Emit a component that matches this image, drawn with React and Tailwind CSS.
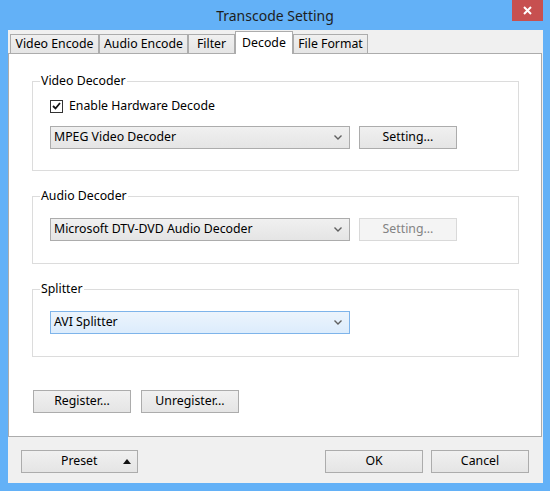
import { useState } from 'react';

const FONT = { fontFamily: '"Noto Sans", "Open Sans", "Liberation Sans", sans-serif' };

const TABS = [
  { label: 'Video Encode', width: 'w-[89px]' },
  { label: 'Audio Encode', width: 'w-[89px]' },
  { label: 'Filter', width: 'w-[47px]' },
  { label: 'Decode', width: 'w-[58px]' },
  { label: 'File Format', width: 'w-[75px]' },
];

function Chevron() {
  return (
    <svg width="8" height="5" viewBox="0 0 8 5" className="shrink-0">
      <polyline points="0.5,0.5 4,4 7.5,0.5" fill="none" stroke="#606060" strokeWidth="1.4" />
    </svg>
  );
}

function Select({ value, focused }) {
  return (
    <div
      className={
        'flex h-[23px] w-[300px] items-center justify-between border pl-[3px] pr-[7px] text-[12.3px] text-black ' +
        (focused
          ? 'border-[#7eb4ea] bg-gradient-to-b from-[#ecf4fc] to-[#dcecfc]'
          : 'border-[#acacac] bg-gradient-to-b from-[#f0f0f0] to-[#e5e5e5]')
      }
    >
      <span className="leading-none">{value}</span>
      <Chevron />
    </div>
  );
}

function Button({ children, disabled, className = '' }) {
  return (
    <button
      type="button"
      disabled={disabled}
      className={
        'flex h-[23px] items-center justify-center border text-[12.3px] leading-none ' +
        (disabled
          ? 'border-[#d9d9d9] bg-[#f4f4f4] text-[#838383] '
          : 'border-[#acacac] bg-gradient-to-b from-[#f0f0f0] to-[#e5e5e5] text-black ') +
        className
      }
    >
      {children}
    </button>
  );
}

function Group({ title, children, className = '' }) {
  return (
    <fieldset className={'w-[487px] border border-[#dcdcdc] p-0 ' + className}>
      <legend className="ml-[7px] px-[1px] text-[12.3px] leading-[16px] text-black">{title}</legend>
      <div className="pl-[17px]">{children}</div>
    </fieldset>
  );
}

export default function App() {
  const [tab, setTab] = useState('Decode');
  const [hw, setHw] = useState(true);

  return (
    <div style={FONT} className="relative h-[491px] w-[550px] select-none bg-[#63b1f7]">
      <div className="flex h-[30px] items-center justify-center text-[14px] text-[#1e1e1e]">
        Transcode Setting
      </div>
      <button
        type="button"
        className="absolute right-[7px] top-0 flex h-[21px] w-[31px] items-center justify-center bg-[#c75050]"
      >
        <svg width="9" height="9" viewBox="0 0 9 9">
          <path d="M1 1 L8 8 M8 1 L1 8" stroke="#fff" strokeWidth="2" />
        </svg>
      </button>

      <div className="ml-[8px] flex h-[453px] w-[535px] flex-col bg-[#f0f0f0]">
        <div className="relative z-10 flex h-[23px] items-end pl-[2px]">
          {TABS.map((t) => {
            const active = t.label === tab;
            return (
              <button
                key={t.label}
                type="button"
                onClick={() => setTab(t.label)}
                className={
                  t.width +
                  ' flex shrink-0 justify-center border border-b-0 border-[#acacac] text-[12.3px] text-black ' +
                  (active
                    ? 'mb-[-1px] h-[23px] items-start bg-white pt-[2px]'
                    : 'h-[19px] items-center bg-gradient-to-b from-[#f0f0f0] to-[#e5e5e5]')
                }
              >
                {t.label}
              </button>
            );
          })}
        </div>

        <div className="flex w-[534px] flex-col border border-[#acacac] bg-white pb-[23px] pl-[23px] pt-[19px]">
          <Group title="Video Decoder">
            <label className="mt-[9px] flex h-[16px] items-center gap-[6px] text-[12.3px] text-black">
              <span
                onClick={() => setHw(!hw)}
                className="flex h-[13px] w-[13px] items-center justify-center border border-[#333] bg-white"
              >
                {hw ? (
                  <svg width="9" height="8" viewBox="0 0 9 8">
                    <path d="M1 4 L3.5 6.5 L8 1" fill="none" stroke="#111" strokeWidth="1.8" />
                  </svg>
                ) : null}
              </span>
              Enable Hardware Decode
            </label>
            <div className="mt-[12px] flex gap-[9px] pb-[21px]">
              <Select value="MPEG Video Decoder" />
              <Button className="w-[98px]">Setting...</Button>
            </div>
          </Group>

          <Group title="Audio Decoder" className="mt-[17px]">
            <div className="mt-[14px] flex gap-[9px] pb-[22px]">
              <Select value="Microsoft DTV-DVD Audio Decoder" />
              <Button disabled className="w-[98px]">
                Setting...
              </Button>
            </div>
          </Group>

          <Group title="Splitter" className="mt-[17px]">
            <div className="mt-[14px] flex pb-[22px]">
              <Select value="AVI Splitter" focused />
            </div>
          </Group>

          <div className="ml-[1px] mt-[33px] flex gap-[10px]">
            <Button className="w-[98px]">Register...</Button>
            <Button className="w-[98px]">Unregister...</Button>
          </div>
        </div>

        <div className="mt-[13px] flex items-center pl-[13px] pr-[14px]">
          <Button className="w-[117px] !justify-between pl-[39px] pr-[6px]">
            <span>Preset</span>
            <svg width="8" height="5" viewBox="0 0 8 5">
              <polygon points="0,5 8,5 4,0" fill="#111" />
            </svg>
          </Button>
          <div className="flex-1" />
          <div className="flex gap-[8px]">
            <Button className="w-[98px]">OK</Button>
            <Button className="w-[98px]">Cancel</Button>
          </div>
        </div>
      </div>
    </div>
  );
}
